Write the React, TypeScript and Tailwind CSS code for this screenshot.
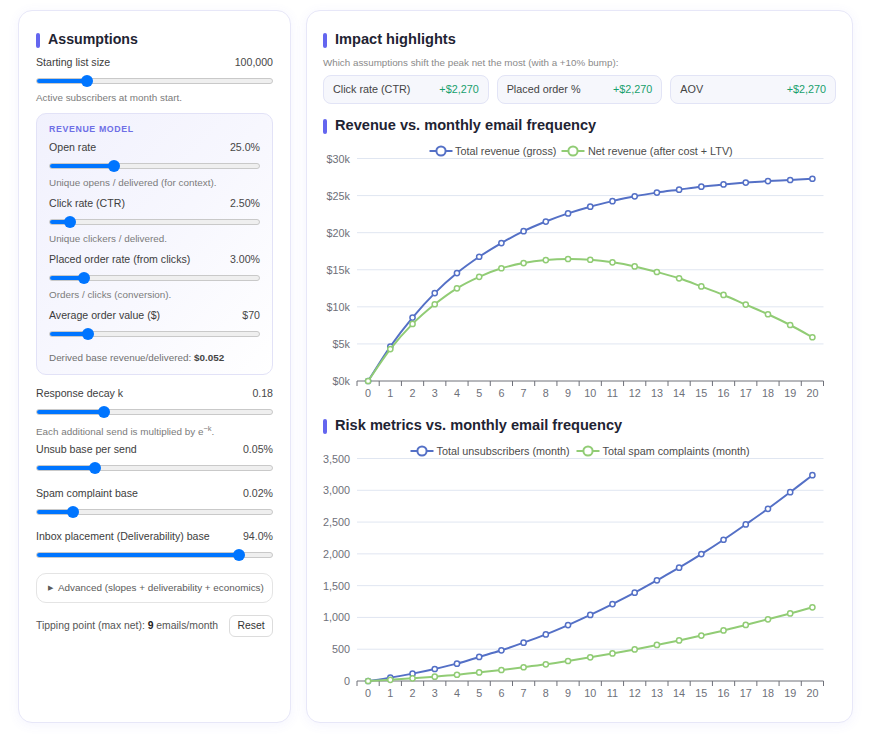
import React from 'react';

type Series = { name: string; color: string; data: number[] };

const gross = [0, 4.65, 8.55, 11.85, 14.55, 16.75, 18.6, 20.2, 21.5, 22.6, 23.5, 24.25, 24.9, 25.4, 25.8, 26.2, 26.5, 26.75, 26.95, 27.1, 27.27].map((v) => v * 1000);
const net = [0, 4.3, 7.7, 10.35, 12.5, 14.05, 15.2, 15.9, 16.3, 16.45, 16.35, 16.0, 15.45, 14.7, 13.85, 12.75, 11.6, 10.3, 9.0, 7.55, 5.9].map((v) => v * 1000);
const unsubs = [0, 53, 116, 189, 273, 378, 483, 603, 733, 880, 1040, 1210, 1389, 1583, 1782, 1996, 2222, 2463, 2709, 2970, 3237];
const spam = [0, 19, 42, 68, 98, 135, 173, 216, 262, 315, 372, 433, 497, 567, 638, 715, 795, 882, 970, 1063, 1159];

const BLUE = '#5470c6';
const GREEN = '#91cc75';

// cubic smoothing through the points (catmull-rom style)
function smoothPath(pts: [number, number][]) {
    let d = `M${pts[0][0]},${pts[0][1]}`;
    for (let i = 0; i < pts.length - 1; i++) {
        const p0 = pts[Math.max(0, i - 1)];
        const p1 = pts[i];
        const p2 = pts[i + 1];
        const p3 = pts[Math.min(pts.length - 1, i + 2)];
        const c1x = p1[0] + (p2[0] - p0[0]) / 6;
        const c1y = p1[1] + (p2[1] - p0[1]) / 6;
        const c2x = p2[0] - (p3[0] - p1[0]) / 6;
        const c2y = p2[1] - (p3[1] - p1[1]) / 6;
        d += ` C${c1x},${c1y} ${c2x},${c2y} ${p2[0]},${p2[1]}`;
    }
    return d;
}

function LineChart({
    height,
    max,
    ticks,
    fmt,
    series,
    legend,
}: {
    height: number;
    max: number;
    ticks: number[];
    fmt: (v: number) => string;
    series: Series[];
    legend: { icon: number; text: number }[];
}) {
    const W = 514;
    const left = 34;
    const right = 500.5;
    const band = (right - left) / 21;
    const top = 22.5;
    const bottom = 245;
    const x = (i: number) => left + band * (i + 0.5);
    const y = (v: number) => bottom - (v / max) * (bottom - top);

    return (
        <svg width={W} height={height} className="block">
            {ticks.map((t) => (
                <g key={t}>
                    {t > 0 && <line x1={left} x2={right} y1={y(t)} y2={y(t)} stroke="#e0e6f1" strokeWidth={1} />}
                    <text x={27} y={y(t)} textAnchor="end" dominantBaseline="central" fontSize={10.8} fill="#6e7079">
                        {fmt(t)}
                    </text>
                </g>
            ))}
            <line x1={left} x2={right} y1={bottom} y2={bottom} stroke="#6e7079" strokeWidth={1} />
            {Array.from({ length: 22 }).map((_, i) => (
                <line key={i} x1={left + band * i} x2={left + band * i} y1={bottom} y2={bottom + 5} stroke="#6e7079" strokeWidth={1} />
            ))}
            {Array.from({ length: 21 }).map((_, i) => (
                <text key={i} x={x(i)} y={bottom + 11.5} textAnchor="middle" dominantBaseline="central" fontSize={10.8} fill="#6e7079">
                    {i}
                </text>
            ))}

            {series.map((s) => {
                const pts = s.data.map((v, i) => [x(i), y(v)] as [number, number]);
                return (
                    <g key={s.name}>
                        <path d={smoothPath(pts)} fill="none" stroke={s.color} strokeWidth={2} />
                        {pts.map(([px, py], i) => (
                            <circle key={i} cx={px} cy={py} r={2.6} fill="#fff" stroke={s.color} strokeWidth={1.5} />
                        ))}
                    </g>
                );
            })}

            {/* legend */}
            {series.map((s, i) => (
                <g key={s.name}>
                    <line x1={legend[i].icon - 11.5} x2={legend[i].icon + 11.5} y1={15} y2={15} stroke={s.color} strokeWidth={2} />
                    <circle cx={legend[i].icon} cy={15} r={4.6} fill="#fff" stroke={s.color} strokeWidth={2} />
                    <text x={legend[i].text} y={15} dominantBaseline="central" fontSize={10.8} fill="#4b4b4b">
                        {s.name}
                    </text>
                </g>
            ))}
        </svg>
    );
}

function Slider({ pct }: { pct: number }) {
    return (
        <div className="relative h-[14px] flex items-center">
            <div className="h-[6px] w-full rounded-full bg-[#efefef] border border-[#c9c9c9] overflow-hidden">
                <div className="h-full bg-[#0075ff]" style={{ width: `${pct}%` }} />
            </div>
            <div
                className="absolute top-1/2 -translate-y-1/2 -translate-x-1/2 w-[12px] h-[12px] rounded-full bg-[#0075ff]"
                style={{ left: `${pct}%` }}
            />
        </div>
    );
}

function Field({
    label,
    value,
    pct,
    desc,
    gap = 'mt-[8px]',
}: {
    label: string;
    value: string;
    pct: number;
    desc?: React.ReactNode;
    gap?: string;
}) {
    return (
        <div className={gap}>
            <div className="h-[14px] flex items-center justify-between text-[10.6px] text-[#3d3d3d]">
                <span>{label}</span>
                <span className="text-[#474747]">{value}</span>
            </div>
            <div className="mt-[4px]">
                <Slider pct={pct} />
            </div>
            {desc && <div className="mt-[4px] h-[12px] flex items-center text-[9.9px] text-[#7b7b7b]">{desc}</div>}
        </div>
    );
}

function SectionTitle({ children, size }: { children: React.ReactNode; size: string }) {
    return (
        <div className="h-5 flex items-center gap-[8px]">
            <span className="w-[4px] h-[15px] rounded-full bg-[#6466ef]" />
            <h2 className={`${size} font-bold text-[#1f2433]`}>{children}</h2>
        </div>
    );
}

function Highlight({ label, delta }: { label: string; delta: string }) {
    return (
        <div className="flex-1 h-[29px] px-[9px] flex items-center justify-between rounded-lg bg-[#f6f7fc] border border-[#e2e4f6] text-[10.8px]">
            <span className="text-[#444]">{label}</span>
            <span className="text-[#16a06c]">{delta}</span>
        </div>
    );
}

export default function App() {
    return (
        <div className="min-h-screen bg-white font-['Liberation_Sans',Arial,sans-serif] pl-[18px] pt-[10px] flex gap-[15px]">
            {/* Assumptions */}
            <div className="w-[273px] h-[713px] rounded-[14px] border border-[#e7e7f8] bg-white shadow-[0_2px_12px_rgba(99,102,241,0.07)] px-[17px] pt-[19px]">
                <SectionTitle size="text-[14.2px]">Assumptions</SectionTitle>

                <Field gap="mt-[6px]" label="Starting list size" value="100,000" pct={21.4} desc="Active subscribers at month start." />

                <div className="mt-[9px] rounded-[10px] border border-[#e2e2f7] bg-gradient-to-br from-[#f1f1fd] via-[#f7f7fe] to-white px-[12px] pt-[10px] pb-[10px]">
                    <div className="h-[12px] flex items-center text-[8.8px] font-bold tracking-[0.07em] text-[#6e6fe6]">REVENUE MODEL</div>
                    <Field gap="mt-[5px]" label="Open rate" value="25.0%" pct={30.9} desc="Unique opens / delivered (for context)." />
                    <Field label="Click rate (CTR)" value="2.50%" pct={10} desc="Unique clickers / delivered." />
                    <Field label="Placed order rate (from clicks)" value="3.00%" pct={16.7} desc="Orders / clicks (conversion)." />
                    <Field label="Average order value ($)" value="$70" pct={18.5} />
                    <div className="mt-[11px] h-[12px] flex items-center text-[9.9px] text-[#707070]">
                        Derived base revenue/delivered:&nbsp;<b className="text-[#454545]">$0.052</b>
                    </div>
                </div>

                <Field
                    gap="mt-[12px]"
                    label="Response decay k"
                    value="0.18"
                    pct={28.7}
                    desc={
                        <span className="mt-[6px]">
                            Each additional send is multiplied by e<sup className="text-[7.5px]">−k</sup>.
                        </span>
                    }
                />
                <Field label="Unsub base per send" value="0.05%" pct={24.7} />
                <Field gap="mt-[12px]" label="Spam complaint base" value="0.02%" pct={15.8} />
                <Field gap="mt-[11px]" label="Inbox placement (Deliverability) base" value="94.0%" pct={85.6} />

                <div className="mt-[11px] h-[30px] rounded-[10px] border border-[#e4e4e4] flex items-center pl-[11px] text-[9.9px] text-[#5a5a5a]">
                    <span className="text-[7px] mr-[5px]">▶</span>
                    Advanced (slopes + deliverability + economics)
                </div>

                <div className="mt-[12px] flex items-center justify-between">
                    <span className="text-[10.4px] text-[#555]">
                        Tipping point (max net): <b className="text-[#222]">9</b> emails/month
                    </span>
                    <button className="h-[22px] w-[44px] rounded-md border border-[#dcdcdc] bg-white text-[10.4px] text-[#333]">Reset</button>
                </div>
            </div>

            {/* Charts */}
            <div className="w-[547px] h-[713px] rounded-[14px] border border-[#e7e7f8] bg-white shadow-[0_2px_12px_rgba(99,102,241,0.07)] px-[16px] pt-[19px]">
                <SectionTitle size="text-[14.6px]">Impact highlights</SectionTitle>
                <div className="mt-[6px] h-[14px] flex items-center text-[9.8px] text-[#8a8a8a]">
                    Which assumptions shift the peak net the most (with a +10% bump):
                </div>
                <div className="mt-[5px] flex gap-[8px]">
                    <Highlight label="Click rate (CTR)" delta="+$2,270" />
                    <Highlight label="Placed order %" delta="+$2,270" />
                    <Highlight label="AOV" delta="+$2,270" />
                </div>

                <div className="mt-[12px]">
                    <SectionTitle size="text-[14.6px]">Revenue vs. monthly email frequency</SectionTitle>
                </div>
                <LineChart
                    height={264}
                    max={30000}
                    ticks={[0, 5000, 10000, 15000, 20000, 25000, 30000]}
                    fmt={(v) => `$${v / 1000}k`}
                    series={[
                        { name: 'Total revenue (gross)', color: BLUE, data: gross },
                        { name: 'Net revenue (after cost + LTV)', color: GREEN, data: net },
                    ]}
                    legend={[
                        { icon: 118, text: 132 },
                        { icon: 250, text: 265 },
                    ]}
                />

                <div className="mt-[16px]">
                    <SectionTitle size="text-[14.6px]">Risk metrics vs. monthly email frequency</SectionTitle>
                </div>
                <LineChart
                    height={268}
                    max={3500}
                    ticks={[0, 500, 1000, 1500, 2000, 2500, 3000, 3500]}
                    fmt={(v) => v.toLocaleString('en-US')}
                    series={[
                        { name: 'Total unsubscribers (month)', color: BLUE, data: unsubs },
                        { name: 'Total spam complaints (month)', color: GREEN, data: spam },
                    ]}
                    legend={[
                        { icon: 99, text: 113.5 },
                        { icon: 265, text: 279.5 },
                    ]}
                />
            </div>
        </div>
    );
}
